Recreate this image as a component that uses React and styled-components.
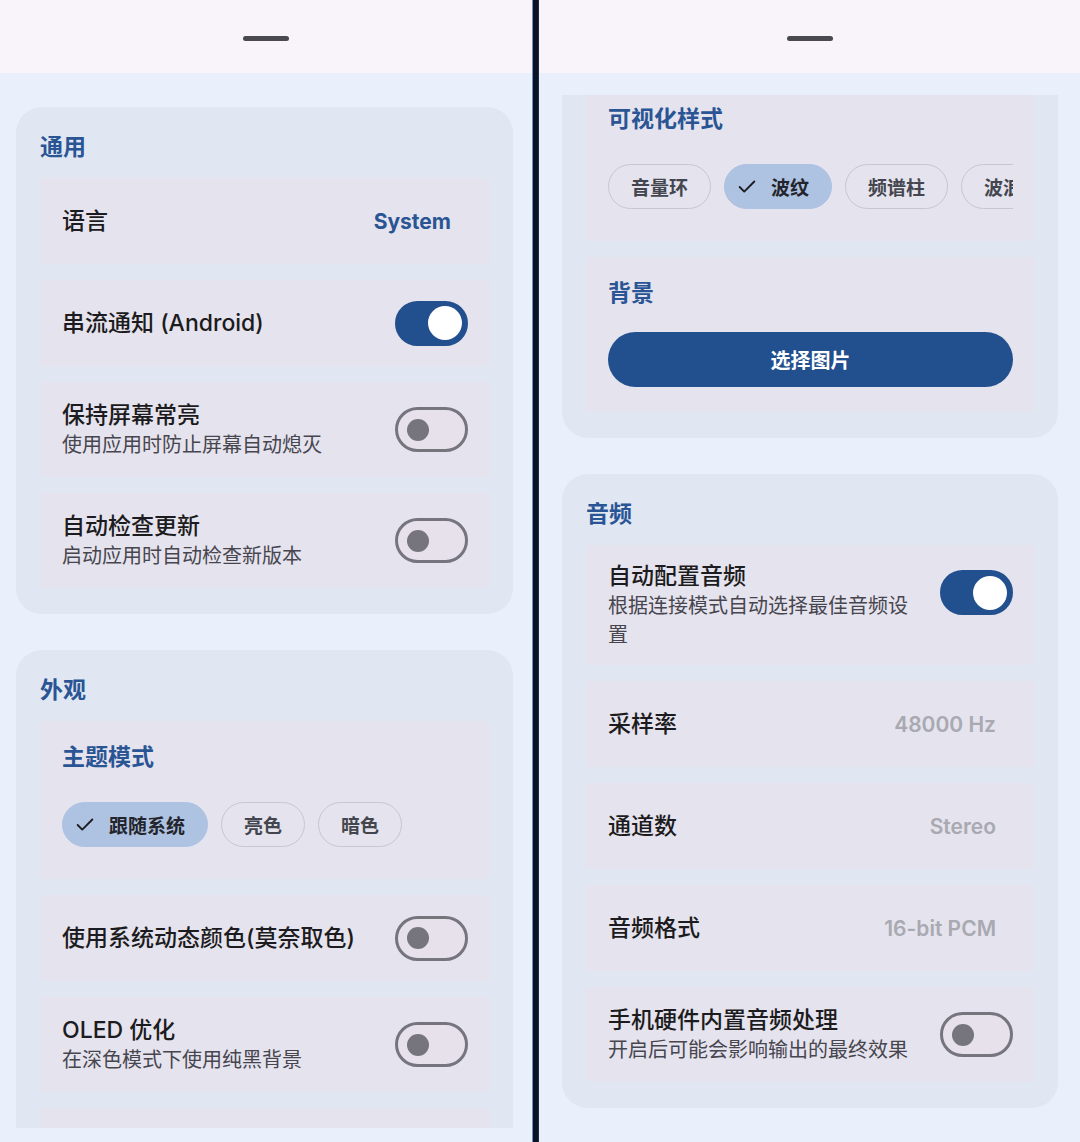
import React from "react";
import styled, { createGlobalStyle } from "styled-components";
import { Check } from "lucide-react";

const GlobalStyle = createGlobalStyle`
  html, body {
    margin: 0;
    padding: 0;
  }
  body {
    width: 1080px;
    height: 1142px;
    overflow: hidden;
    background: #e9f0fb;
    font-family: "Inter", "Noto Sans CJK SC", sans-serif;
    -webkit-font-smoothing: antialiased;
  }
`;

const Page = styled.div`
  display: flex;
  width: 1080px;
  height: 1142px;
`;

const Phone = styled.div`
  width: ${(p) => p.$width}px;
  flex: none;
  display: flex;
  flex-direction: column;
  background: #e9f0fb;
`;

const TopBar = styled.div`
  height: 73px;
  flex: none;
  box-sizing: border-box;
  padding-top: 36px;
  display: flex;
  justify-content: center;
  background: #f8f4fa;
`;

const Handle = styled.div`
  width: 46px;
  height: 5px;
  border-radius: 3px;
  background: #4a4950;
`;

// the visible part of the scrolling list
const Viewport = styled.div`
  flex: 1;
  min-height: 0;
  margin: 22px 0 ${(p) => p.$bottom}px;
  overflow: hidden;
`;

const Scroll = styled.div`
  display: flex;
  flex-direction: column;
  gap: 36px;
  padding: ${(p) => p.$top}px ${(p) => p.$right}px 0 ${(p) => p.$left}px;
  margin-top: ${(p) => -p.$offset}px;
`;

const Divider = styled.div`
  width: 7px;
  flex: none;
  background: linear-gradient(90deg, #6f90c6 0, #6f90c6 1px, #0b1322 1px, #0b1322 6px, #1c2c48 6px);
`;

const Card = styled.section`
  background: #e0e7f2;
  border-radius: 26px;
  padding: 25px 23px 26px 24px;
  display: flex;
  flex-direction: column;
  gap: 16px;
`;

const SectionTitle = styled.h2`
  margin: 0;
  font-size: 23px;
  line-height: 30px;
  font-weight: 700;
  color: #2a5595;
`;

const Item = styled.div`
  background: #e5e3ed;
  border-radius: 4px;
  min-height: 86px;
  box-sizing: border-box;
  padding: 15px 22px;
  display: flex;
  align-items: center;
  gap: 24px;
`;

const ItemText = styled.div`
  flex: 1;
  min-width: 0;
  min-height: ${(p) => (p.$withSub ? 65 : 0)}px;
  display: flex;
  flex-direction: column;
  justify-content: center;
`;

const ItemTitle = styled.div`
  font-size: 23px;
  line-height: 32px;
  font-weight: 500;
  color: #1c1b20;
`;

const ItemSub = styled.div`
  font-size: 20px;
  line-height: 29px;
  color: #47464f;
`;

const Value = styled.div`
  flex: none;
  margin-right: 17px;
  font-size: 21px;
  font-weight: ${(p) => (p.$accent ? 700 : 600)};
  color: ${(p) => (p.$accent ? "#2a5595" : "#a8a9b1")};
`;

const Track = styled.div`
  width: 73px;
  height: 45px;
  flex: none;
  align-self: ${(p) => (p.$top ? "flex-start" : "center")};
  margin-top: ${(p) => (p.$top ? 10 : 0)}px;
  box-sizing: border-box;
  border-radius: 23px;
  display: flex;
  align-items: center;
  justify-content: ${(p) => (p.$on ? "flex-end" : "flex-start")};
  padding: 0 ${(p) => (p.$on ? 3 : 9)}px;
  background: ${(p) => (p.$on ? "#22508f" : "#e6e1ea")};
  border: 3px solid ${(p) => (p.$on ? "#22508f" : "#76757e")};
`;

const Knob = styled.div`
  width: ${(p) => (p.$on ? 34 : 22)}px;
  height: ${(p) => (p.$on ? 34 : 22)}px;
  border-radius: 50%;
  background: ${(p) => (p.$on ? "#ffffff" : "#76757e")};
`;

const BlockItem = styled.div`
  background: #e5e3ed;
  border-radius: 4px;
  padding: 20px 22px ${(p) => p.$bottom}px;
  display: flex;
  flex-direction: column;
  gap: ${(p) => p.$gap}px;
`;

const BlockTitle = styled.div`
  font-size: 23px;
  line-height: 32px;
  font-weight: 700;
  color: #2a5595;
`;

const Chips = styled.div`
  display: flex;
  gap: 13px;
  overflow: hidden;
`;

const Chip = styled.div`
  flex: none;
  height: 45px;
  box-sizing: border-box;
  border-radius: 23px;
  display: flex;
  align-items: center;
  gap: 13px;
  padding: ${(p) => (p.$selected ? "0 22px 0 11px" : "0 22px")};
  font-size: 19px;
  font-weight: 700;
  color: ${(p) => (p.$selected ? "#23252c" : "#44464f")};
  background: ${(p) => (p.$selected ? "#aec2e2" : "transparent")};
  border: 1.5px solid ${(p) => (p.$selected ? "#aec2e2" : "#c6c7d0")};
`;

const WideButton = styled.button`
  width: 100%;
  height: 55px;
  border: none;
  border-radius: 28px;
  background: #22508f;
  color: #ffffff;
  font-family: inherit;
  font-size: 20px;
  font-weight: 700;
`;

function Switch({ on, top }) {
  return (
    <Track $on={on} $top={top}>
      <Knob $on={on} />
    </Track>
  );
}

function Row({ title, sub, value, accent, toggle }) {
  return (
    <Item>
      <ItemText $withSub={!!sub}>
        {title && <ItemTitle>{title}</ItemTitle>}
        {sub && <ItemSub>{sub}</ItemSub>}
      </ItemText>
      {value && <Value $accent={accent}>{value}</Value>}
      {toggle !== undefined && <Switch on={toggle} top={!!sub} />}
    </Item>
  );
}

function ChipGroup({ title, options, selected }) {
  return (
    <BlockItem $gap={29} $bottom={32}>
      <BlockTitle>{title}</BlockTitle>
      <Chips>
        {options.map((o) => (
          <Chip key={o} $selected={o === selected}>
            {o === selected && <Check size={22} strokeWidth={2} color="#1c1b1f" />}
            {o}
          </Chip>
        ))}
      </Chips>
    </BlockItem>
  );
}

const visualOptions = ["音量环", "波纹", "频谱柱", "波浪"];

export default function App() {
  return (
    <>
      <GlobalStyle />
      <Page>
        <Phone $width={532}>
          <TopBar>
            <Handle />
          </TopBar>
          <Viewport $bottom={14}>
            <Scroll $top={12} $left={16} $right={19} $offset={0}>
              <Card>
                <SectionTitle>通用</SectionTitle>
                <Row title="语言" value="System" accent />
                <Row title="串流通知 (Android)" toggle={true} />
                <Row title="保持屏幕常亮" sub="使用应用时防止屏幕自动熄灭" toggle={false} />
                <Row title="自动检查更新" sub="启动应用时自动检查新版本" toggle={false} />
              </Card>
              <Card>
                <SectionTitle>外观</SectionTitle>
                <ChipGroup title="主题模式" options={["跟随系统", "亮色", "暗色"]} selected="跟随系统" />
                <Row title="使用系统动态颜色(莫奈取色)" toggle={false} />
                <Row title="OLED 优化" sub="在深色模式下使用纯黑背景" toggle={false} />
                {/* next row only peeks in at the bottom edge */}
                <Row />
              </Card>
            </Scroll>
          </Viewport>
        </Phone>
        <Divider />
        <Phone $width={541}>
          <TopBar>
            <Handle />
          </TopBar>
          <Viewport $bottom={0}>
            <Scroll $top={0} $left={23} $right={22} $offset={37}>
              <Card>
                <ChipGroup title="可视化样式" options={visualOptions} selected="波纹" />
                <BlockItem $gap={23} $bottom={25}>
                  <BlockTitle>背景</BlockTitle>
                  <WideButton>选择图片</WideButton>
                </BlockItem>
              </Card>
              <Card>
                <SectionTitle>音频</SectionTitle>
                <Row title="自动配置音频" sub="根据连接模式自动选择最佳音频设置" toggle={true} />
                <Row title="采样率" value="48000 Hz" />
                <Row title="通道数" value="Stereo" />
                <Row title="音频格式" value="16-bit PCM" />
                <Row title="手机硬件内置音频处理" sub="开启后可能会影响输出的最终效果" toggle={false} />
              </Card>
            </Scroll>
          </Viewport>
        </Phone>
      </Page>
    </>
  );
}
